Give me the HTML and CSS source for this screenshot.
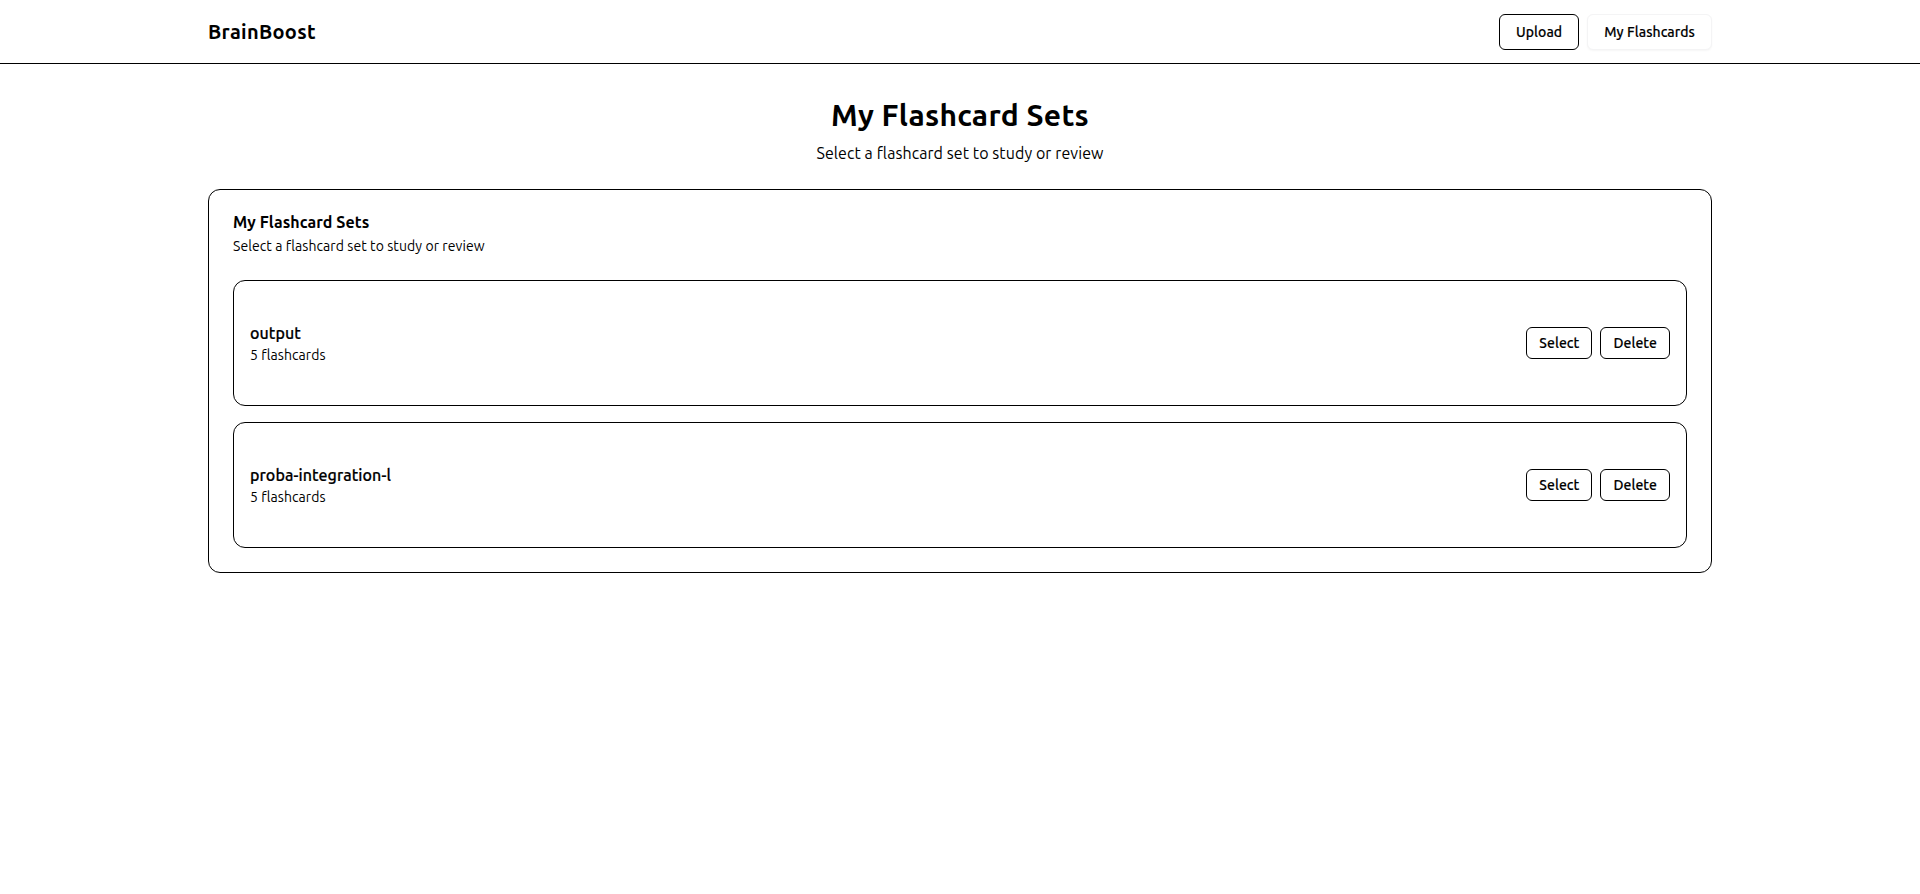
FILE: index.html
```html
<!DOCTYPE html>
<html lang="en">
<head>
<meta charset="utf-8">
<title>BrainBoost</title>
<link rel="stylesheet" href="styles.css">
</head>
<body>
<header class="site-header">
  <div class="container header-inner">
    <a class="brand" href="#">BrainBoost</a>
    <nav class="nav">
      <button class="btn btn-outline">Upload</button>
      <button class="btn btn-ghost">My Flashcards</button>
    </nav>
  </div>
</header>
<main class="container main">
  <h1 class="page-title">My Flashcard Sets</h1>
  <p class="page-subtitle">Select a flashcard set to study or review</p>
  <section class="card">
    <div class="card-header">
      <h2 class="card-title">My Flashcard Sets</h2>
      <p class="card-desc">Select a flashcard set to study or review</p>
    </div>
    <div class="set-list">
      <div class="set-item">
        <div class="set-info">
          <div class="set-name">output</div>
          <div class="set-count">5 flashcards</div>
        </div>
        <div class="set-actions">
          <button class="btn btn-sm">Select</button>
          <button class="btn btn-sm">Delete</button>
        </div>
      </div>
      <div class="set-item">
        <div class="set-info">
          <div class="set-name">proba-integration-l</div>
          <div class="set-count">5 flashcards</div>
        </div>
        <div class="set-actions">
          <button class="btn btn-sm">Select</button>
          <button class="btn btn-sm">Delete</button>
        </div>
      </div>
    </div>
  </section>
</main>
</body>
</html>
```
FILE: styles.css
```css
* { box-sizing: border-box; }
html, body { margin: 0; padding: 0; }
body {
  font-family: "Ubuntu", "Open Sans", "Noto Sans", sans-serif;
  color: #000;
  background: #fff;
  letter-spacing: 0.005em;
}
.container {
  max-width: 1536px;
  margin: 0 auto;
  padding: 0 16px;
}
.site-header {
  height: 64px;
  border-bottom: 1px solid #000;
}
.header-inner {
  height: 63px;
  padding-top: 1px;
  display: flex;
  align-items: center;
  justify-content: space-between;
}
.brand {
  font-size: 20px;
  font-weight: 700;
  letter-spacing: 0.015em;
  color: #000;
  text-decoration: none;
  line-height: 28px;
}
.nav { display: flex; gap: 8px; align-items: center; }
.btn {
  font-family: inherit;
  letter-spacing: 0.005em;
  font-size: 14px;
  font-weight: 500;
  -webkit-text-stroke: 0.15px #000;
  color: #000;
  background: #fff;
  border: 1px solid #000;
  border-radius: 6px;
  height: 36px;
  padding: 0 16px;
  line-height: 20px;
  cursor: pointer;
}
.btn-ghost {
  border-color: #f4f4f5;
  box-shadow: 0 1px 2px rgba(0,0,0,0.04);
}
.btn-sm {
  height: 32px;
  padding: 0 12px;
}
.main { padding-top: 33px; }
.page-title {
  margin: 0;
  text-align: center;
  font-size: 30px;
  line-height: 36px;
  font-weight: 700;
  letter-spacing: 0.01em;
}
.page-subtitle {
  margin: 8px 0 24px;
  text-align: center;
  font-size: 16px;
  line-height: 24px;
}
.card {
  border: 1px solid #000;
  border-radius: 12px;
  padding: 24px;
}
.card-header {
  display: flex;
  flex-direction: column;
  gap: 6px;
  margin-bottom: 24px;
}
.card-title {
  margin: 0;
  font-size: 16px;
  line-height: 16px;
  font-weight: 700;
}
.card-desc {
  margin: 0;
  font-size: 14px;
  line-height: 20px;
}
.set-list { display: flex; flex-direction: column; gap: 16px; }
.set-item {
  border: 1px solid #000;
  border-radius: 12px;
  padding: 40px 16px;
  display: flex;
  align-items: center;
  justify-content: space-between;
}
.set-name {
  font-size: 16px;
  line-height: 24px;
  font-weight: 500;
  -webkit-text-stroke: 0.2px #000;
}
.set-count {
  font-size: 14px;
  line-height: 20px;
}
.set-actions { display: flex; gap: 8px; }
```
